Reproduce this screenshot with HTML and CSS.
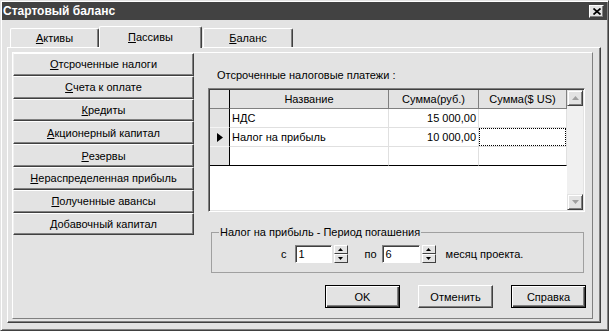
FILE: index.html
```html
<!DOCTYPE html>
<html lang="ru">
<head>
<meta charset="utf-8">
<title>Стартовый баланс</title>
<link rel="stylesheet" href="styles.css">
</head>
<body>
<div class="window">
  <div class="titlebar">
    <span class="title">Стартовый баланс</span>
    <span class="close"><svg width="8" height="7" viewBox="0 0 8 7"><path d="M0.5 0.5 L7.5 6.5 M7.5 0.5 L0.5 6.5" stroke="#000" stroke-width="1.7" fill="none"/></svg></span>
  </div>
  <div class="tabs">
    <div class="tab t1"><u>А</u>ктивы</div>
    <div class="tab t2 active"><u>П</u>ассивы</div>
    <div class="tab t3"><u>Б</u>аланс</div>
  </div>
  <div class="tabpanel">
    <div class="inner">
      <div class="sidebar">
        <div class="sbtn"><u>О</u>тсроченные налоги</div>
        <div class="sbtn"><u>С</u>чета к оплате</div>
        <div class="sbtn"><u>К</u>редиты</div>
        <div class="sbtn"><u>А</u>кционерный капитал</div>
        <div class="sbtn"><u>Р</u>езервы</div>
        <div class="sbtn"><u>Н</u>ераспределенная прибыль</div>
        <div class="sbtn"><u>П</u>олученные авансы</div>
        <div class="sbtn"><u>Д</u>обавочный капитал</div>
      </div>
      <div class="content">
        <div class="caption">Отсроченные налоговые платежи :</div>
        <div class="grid">
          <div class="cells">
            <div class="row head">
              <div class="c ind"></div>
              <div class="c name">Название</div>
              <div class="c rub">Сумма(руб.)</div>
              <div class="c usd">Сумма($ US)</div>
            </div>
            <div class="row">
              <div class="c ind"></div>
              <div class="c name">НДС</div>
              <div class="c rub num">15 000,00</div>
              <div class="c usd"></div>
            </div>
            <div class="row">
              <div class="c ind"><svg width="6" height="9" viewBox="0 0 6 9"><path d="M0 0 L6 4.5 L0 9 Z" fill="#000"/></svg></div>
              <div class="c name">Налог на прибыль</div>
              <div class="c rub num">10 000,00</div>
              <div class="c usd nopad"><div class="focus"></div></div>
            </div>
            <div class="row last">
              <div class="c ind"></div>
              <div class="c name"></div>
              <div class="c rub"></div>
              <div class="c usd"></div>
            </div>
          </div>
          <div class="vscroll">
            <div class="sb"><svg width="7" height="4" viewBox="0 0 7 4"><path d="M3.5 0 L7 4 L0 4 Z" fill="#a0a0a0"/></svg></div>
            <div class="sb"><svg width="7" height="4" viewBox="0 0 7 4"><path d="M0 0 L7 0 L3.5 4 Z" fill="#a0a0a0"/></svg></div>
          </div>
        </div>
        <fieldset class="period">
          <legend>Налог на прибыль - Период погашения</legend>
          <div class="prow">
            <span class="lbl-from">с</span>
            <div class="edit e1">1</div>
            <div class="updown">
              <div class="ud"><svg width="5" height="3" viewBox="0 0 5 3"><path d="M2.5 0 L5 3 L0 3 Z" fill="#000"/></svg></div>
              <div class="ud"><svg width="5" height="3" viewBox="0 0 5 3"><path d="M0 0 L5 0 L2.5 3 Z" fill="#000"/></svg></div>
            </div>
            <span class="lbl-to">по</span>
            <div class="edit e2">6</div>
            <div class="updown">
              <div class="ud"><svg width="5" height="3" viewBox="0 0 5 3"><path d="M2.5 0 L5 3 L0 3 Z" fill="#000"/></svg></div>
              <div class="ud"><svg width="5" height="3" viewBox="0 0 5 3"><path d="M0 0 L5 0 L2.5 3 Z" fill="#000"/></svg></div>
            </div>
            <span class="lbl-month">месяц проекта.</span>
          </div>
        </fieldset>
        <div class="actions">
          <button class="btn def">OK</button>
          <button class="btn">Отменить</button>
          <button class="btn def">Справка</button>
        </div>
      </div>
    </div>
  </div>
</div>
</body>
</html>
```

FILE: styles.css
```css
body {
  margin: 0;
  background: #e3e3e3;
  font-family: "Liberation Sans", Arial, sans-serif;
  font-size: 11px;
  color: #000;
}

.window {
  width: 609px;
  height: 331px;
  box-sizing: border-box;
  border: 1px solid;
  border-color: #e3e3e3 #404040 #404040 #e3e3e3;
  box-shadow: inset 1px 1px #fff, inset -1px -1px #808080;
  padding: 1px;
  background: #e3e3e3;
}

.titlebar {
  height: 18px;
  background: #424242;
  color: #fff;
  display: flex;
  align-items: center;
  justify-content: space-between;
  padding-left: 1px;
}

.title {
  font-weight: bold;
  font-size: 12px;
}

.close {
  width: 15px;
  height: 13px;
  box-sizing: border-box;
  background: #e3e3e3;
  border: 1px solid;
  border-color: #fff #404040 #404040 #fff;
  box-shadow: inset -1px -1px #808080;
  margin-right: 3px;
  display: flex;
  align-items: center;
  justify-content: center;
}

.tabs {
  display: flex;
  align-items: flex-end;
  height: 21px;
  margin-top: 6px;
  padding-left: 8px;
}

.tab {
  height: 19px;
  box-sizing: border-box;
  border-top: 1px solid #fff;
  border-left: 1px solid #fff;
  border-right: 1px solid #404040;
  box-shadow: inset -1px 0 #808080;
  border-radius: 2px 2px 0 0;
  display: flex;
  align-items: center;
  justify-content: center;
  background: #e3e3e3;
}

.t1 { width: 89px; }
.t2 { width: 103px; }
.t3 { width: 90px; margin-left: 1px; }

.tab.active {
  height: 22px;
  margin-bottom: -1px;
  padding-bottom: 2px;
  position: relative;
  z-index: 1;
}

.tabpanel {
  margin-left: 5px;
  width: 594px;
  height: 276px;
  box-sizing: border-box;
  border: 1px solid;
  border-color: #fff #404040 #404040 #fff;
  box-shadow: inset -1px -1px #808080;
  padding: 4px 7px 3px 4px;
}

.inner {
  height: 100%;
  box-sizing: border-box;
  border: 1px solid;
  border-color: #fff #808080 #808080 #fff;
  display: flex;
}

.sidebar {
  width: 181px;
  display: flex;
  flex-direction: column;
}

.sbtn {
  height: 22.8px;
  box-sizing: border-box;
  border: 1px solid;
  border-color: #fff #404040 #404040 #f0f0f0;
  box-shadow: inset -1px -1px #808080;
  display: flex;
  align-items: center;
  justify-content: center;
  white-space: nowrap;
}

.content {
  margin-left: 14px;
  width: 377px;
  display: flex;
  flex-direction: column;
}

.caption {
  margin-top: 15px;
  padding-left: 9px;
  line-height: 14px;
}

.grid {
  margin-top: 6px;
  height: 124px;
  box-sizing: border-box;
  border: 1px solid;
  border-color: #808080 #fff #fff #808080;
  box-shadow: inset 1px 1px #404040, inset -1px -1px #e3e3e3;
  padding: 1px;
  background: #fff;
  display: flex;
}

.cells {
  flex: 1;
}

.row {
  display: flex;
  height: 19px;
}

.c {
  box-sizing: border-box;
  height: 19px;
  border-right: 1px solid #e0e0e0;
  border-bottom: 1px solid #e0e0e0;
  line-height: 18px;
  padding: 0 2px;
  white-space: nowrap;
  overflow: hidden;
}

.ind {
  width: 20px;
  background: #e3e3e3;
  border-right-color: #000;
  border-bottom-color: #f4f4f4;
  display: flex;
  align-items: center;
  justify-content: center;
  padding: 0;
}

.name { width: 159px; }
.rub { width: 90px; }
.usd { width: 88px; }

.num { text-align: right; }

.nopad { padding: 0; }

.focus {
  height: 100%;
  box-sizing: border-box;
  border: 1px dotted #000;
}

.head .c {
  background: #e3e3e3;
  border-right-color: #808080;
  border-bottom-color: #808080;
  text-align: center;
}

.head .ind {
  border-right-color: #000;
}

.last .c {
  border-bottom-color: #000;
}

.vscroll {
  width: 16px;
  background: #f0f0f0;
  display: flex;
  flex-direction: column;
  justify-content: space-between;
}

.sb {
  height: 16px;
  box-sizing: border-box;
  border: 1px solid;
  border-color: #e3e3e3 #404040 #404040 #e3e3e3;
  box-shadow: inset 1px 1px #fff, inset -1px -1px #808080;
  background: #e3e3e3;
  display: flex;
  align-items: center;
  justify-content: center;
}

.period {
  margin: 13px 1px 0 3px;
  padding: 0;
  border: 1px solid #a0a0a0;
  min-width: 0;
}

.period legend {
  margin-left: 7px;
  padding: 0 1px;
  line-height: 14px;
}

.prow {
  display: flex;
  align-items: center;
  height: 18px;
  margin-top: 6px;
  margin-bottom: 9px;
  padding-left: 69px;
}

.lbl-from { margin-right: 8px; }
.lbl-to { margin-left: 17px; margin-right: 5px; }
.lbl-month { margin-left: 10px; }

.edit {
  height: 18px;
  box-sizing: border-box;
  border: 1px solid;
  border-color: #808080 #fff #fff #808080;
  box-shadow: inset 1px 1px #404040;
  background: #fff;
  padding-left: 3px;
  line-height: 16px;
}

.e1 { width: 37px; }
.e2 { width: 38px; }

.updown {
  width: 14px;
  height: 18px;
  margin-left: 2px;
  display: flex;
  flex-direction: column;
}

.ud {
  flex: 1;
  box-sizing: border-box;
  border: 1px solid;
  border-color: #fff #404040 #404040 #fff;
  background: #e3e3e3;
  display: flex;
  align-items: center;
  justify-content: center;
}

.actions {
  margin-top: 12px;
  display: flex;
  justify-content: flex-end;
  gap: 18px;
  margin-right: -1px;
}

.btn {
  width: 75px;
  height: 23px;
  box-sizing: border-box;
  font: inherit;
  color: #000;
  background: #e3e3e3;
  border: 1px solid;
  border-color: #fff #404040 #404040 #fff;
  box-shadow: inset -1px -1px #808080;
  padding: 0;
}

.btn.def {
  border-color: #000;
  box-shadow: inset 1px 1px #fff, inset -1px -1px #404040, inset -2px -2px #808080;
}
```
